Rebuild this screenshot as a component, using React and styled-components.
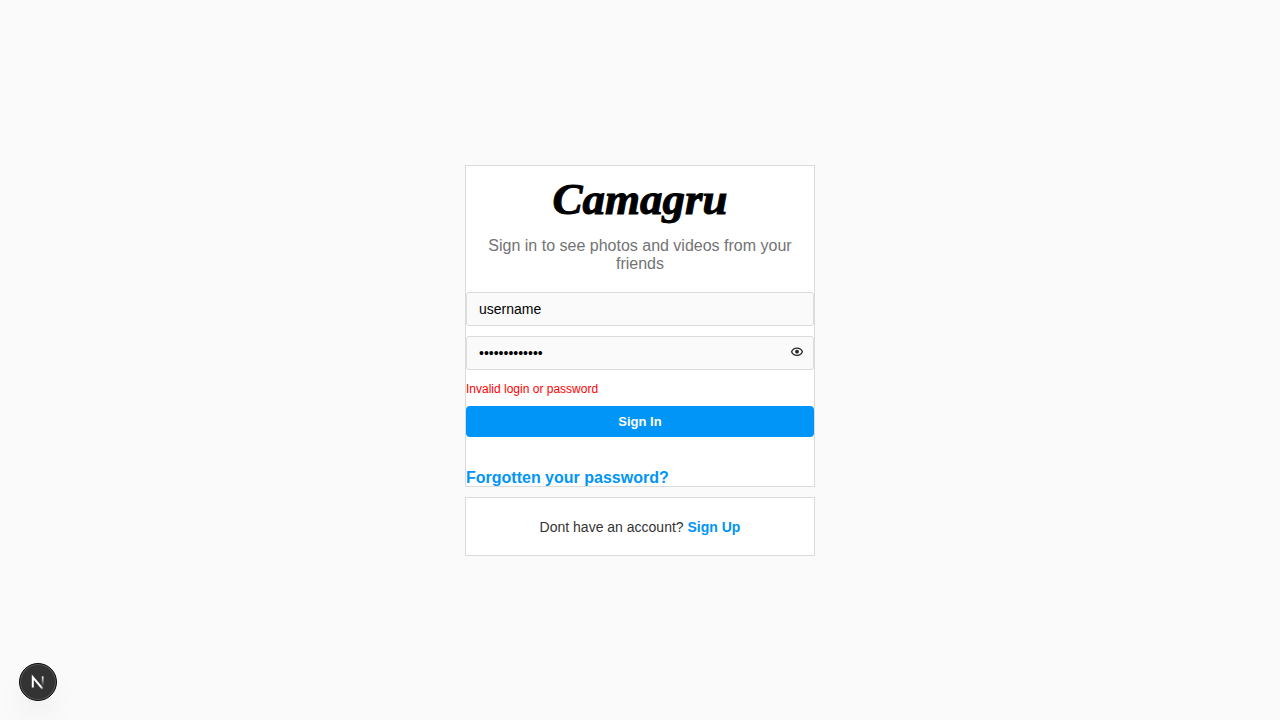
import React, { useState } from "react";
import styled, { createGlobalStyle } from "styled-components";

const GlobalStyle = createGlobalStyle`
  *, *::before, *::after { box-sizing: border-box; }
  body {
    margin: 0;
    background: #fafafa;
    color: #333;
    font-family: "Liberation Sans", Arial, Helvetica, sans-serif;
  }
`;

const Page = styled.main`
  min-height: 100vh;
  display: flex;
  flex-direction: column;
  align-items: center;
  justify-content: center;
  gap: 10px;
`;

const Card = styled.section`
  width: 100%;
  max-width: 350px;
  background: #fff;
  border: 1px solid #dbdbdb;
`;

const Brand = styled.h1`
  margin: 0;
  padding-bottom: 5px;
  text-align: center;
  font: italic bold 45px/66px "Liberation Serif", "Times New Roman", serif;
  color: #000;
  -webkit-text-stroke: 1px #000;
`;

const Tagline = styled.p`
  margin: 0 0 19px;
  padding: 0 20px;
  text-align: center;
  font-size: 16px;
  line-height: 18px;
  color: #737373;
`;

const Form = styled.form`
  display: flex;
  flex-direction: column;
  gap: 10px;
`;

const Field = styled.div`
  height: 34px;
  display: flex;
  align-items: center;
  background: #fafafa;
  border: 1px solid #dbdbdb;
  border-radius: 3px;
`;

const TextInput = styled.input`
  flex: 1;
  min-width: 0;
  height: 100%;
  padding: 0 12px;
  border: 0;
  outline: 0;
  background: transparent;
  font-family: inherit;
  font-size: 14px;
  color: #000;
`;

const RevealButton = styled.button`
  display: flex;
  margin: 0 9px 2px 0;
  padding: 0;
  border: 0;
  background: transparent;
  color: #262626;
  cursor: pointer;
`;

const ErrorText = styled.p`
  margin: 0;
  padding-top: 2px;
  font-size: 12px;
  line-height: 14px;
  color: #f00;
`;

const SubmitButton = styled.button`
  height: 31px;
  border: 0;
  border-radius: 4px;
  background: #0095f6;
  color: #fff;
  font-family: inherit;
  font-size: 13px;
  font-weight: bold;
  cursor: pointer;
`;

const TextLink = styled.a`
  color: #0095f6;
  font-weight: bold;
  text-decoration: none;
`;

const ForgotRow = styled.div`
  padding-top: 33px;
  font-size: 16px;
  line-height: 16px;
`;

const SignUpText = styled.p`
  margin: 0;
  padding: 21px 20px 19px;
  text-align: center;
  font-size: 14px;
  line-height: 17px;
`;

const DevBadge = styled.button`
  position: fixed;
  left: 19px;
  bottom: 19px;
  width: 38px;
  height: 38px;
  padding: 0;
  display: flex;
  align-items: center;
  justify-content: center;
  border: 1px solid #0a0a0a;
  border-radius: 50%;
  background: #333;
  box-shadow: inset 0 0 0 1px #5a5a5a, 0 16px 32px -8px rgba(0, 0, 0, 0.12);
  cursor: pointer;
`;

function EyeIcon() {
  return (
    <svg width="14" height="14" viewBox="0 0 14 14" fill="none" aria-hidden="true">
      <path
        d="M1.6 6.7C2.6 4.3 4.6 3.2 7 3.2S11.4 4.3 12.4 6.7C11.4 9.2 9.4 10.3 7 10.3S2.6 9.2 1.6 6.7Z"
        stroke="currentColor"
        strokeWidth="1.3"
      />
      <circle cx="7" cy="6.7" r="1.9" fill="currentColor" />
    </svg>
  );
}

function NextIcon() {
  return (
    <svg width="36" height="36" viewBox="0 0 36 36" fill="none" aria-hidden="true">
      <defs>
        <linearGradient id="diagonal" x1="18" y1="18" x2="24" y2="25" gradientUnits="userSpaceOnUse">
          <stop stopColor="#fff" />
          <stop offset="0.6" stopColor="#fff" />
          <stop offset="1" stopColor="#fff" stopOpacity="0" />
        </linearGradient>
        <linearGradient id="stem" x1="23" y1="12" x2="23" y2="22" gradientUnits="userSpaceOnUse">
          <stop stopColor="#fff" />
          <stop offset="1" stopColor="#fff" stopOpacity="0" />
        </linearGradient>
      </defs>
      <path d="M12.8 23.5V13.2L22.8 25" stroke="url(#diagonal)" strokeWidth="2" />
      <path d="M22.7 12.4V22" stroke="url(#stem)" strokeWidth="1.8" />
    </svg>
  );
}

export default function App() {
  const [login, setLogin] = useState("username");
  const [password, setPassword] = useState("secretsecret1");
  const [visible, setVisible] = useState(false);

  return (
    <>
      <GlobalStyle />
      <Page>
        <Card>
          <Brand>Camagru</Brand>
          <Tagline>Sign in to see photos and videos from your friends</Tagline>
          <Form onSubmit={(event) => event.preventDefault()}>
            <Field>
              <TextInput
                aria-label="Username"
                value={login}
                onChange={(event) => setLogin(event.target.value)}
              />
            </Field>
            <Field>
              <TextInput
                aria-label="Password"
                type={visible ? "text" : "password"}
                value={password}
                onChange={(event) => setPassword(event.target.value)}
              />
              <RevealButton
                type="button"
                aria-label="Show password"
                onClick={() => setVisible(!visible)}
              >
                <EyeIcon />
              </RevealButton>
            </Field>
            <ErrorText role="alert">Invalid login or password</ErrorText>
            <SubmitButton type="submit">Sign In</SubmitButton>
          </Form>
          <ForgotRow>
            <TextLink href="#reset">Forgotten your password?</TextLink>
          </ForgotRow>
        </Card>
        <Card>
          <SignUpText>
            Dont have an account? <TextLink href="#signup">Sign Up</TextLink>
          </SignUpText>
        </Card>
      </Page>
      <DevBadge type="button" aria-label="Open Next.js Dev Tools">
        <NextIcon />
      </DevBadge>
    </>
  );
}
